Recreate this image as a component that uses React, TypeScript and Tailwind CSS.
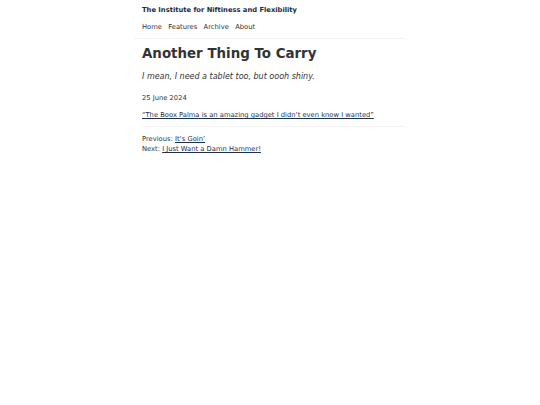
import React from "react";

export default function App() {
  return (
    <div className="min-h-[405px] bg-white" style={{ fontFamily: '"DejaVu Sans", Verdana, sans-serif' }}>
      <div className="w-[270px] mx-auto">
        <header className="px-[7px] pt-[5px] pb-[6px] border-b border-dotted border-[#e6e6e6]">
          <div className="text-[6.75px] leading-[10px] font-bold text-[#1d2b3f]">
            The Institute for Niftiness and Flexibility
          </div>
          <nav className="mt-[7px] flex gap-[6.3px] text-[6.75px] leading-[10px] text-[#333]">
            <a>Home</a>
            <a>Features</a>
            <a>Archive</a>
            <a>About</a>
          </nav>
        </header>
        <main className="px-[7px]">
          <h1 className="mt-[7px] text-[13.4px] leading-[16px] font-bold text-[#333]">Another Thing To Carry</h1>
          <p className="mt-[9px] text-[8px] leading-[12px] italic text-[#333]">
            I mean, I need a tablet too, but oooh shiny.
          </p>
          <p className="mt-[10px] text-[6.75px] leading-[10px] text-[#333]">25 June 2024</p>
          <p className="mt-[7px] text-[6.75px] leading-[10px]">
            <a className="underline text-[#1f2f4f]">“The Boox Palma is an amazing gadget I didn’t even know I wanted”</a>
          </p>
          <div className="mt-[6px] border-t border-dotted border-[#e6e6e6] mr-[-7px]" />
          <div className="mt-[7px] text-[6.75px] leading-[10px] text-[#333]">
            <div>
              Previous: <a className="underline text-[#1f2f4f]">It’s Goin’</a>
            </div>
            <div>
              Next: <a className="underline text-[#1f2f4f]">I Just Want a Damn Hammer!</a>
            </div>
          </div>
        </main>
      </div>
    </div>
  );
}
